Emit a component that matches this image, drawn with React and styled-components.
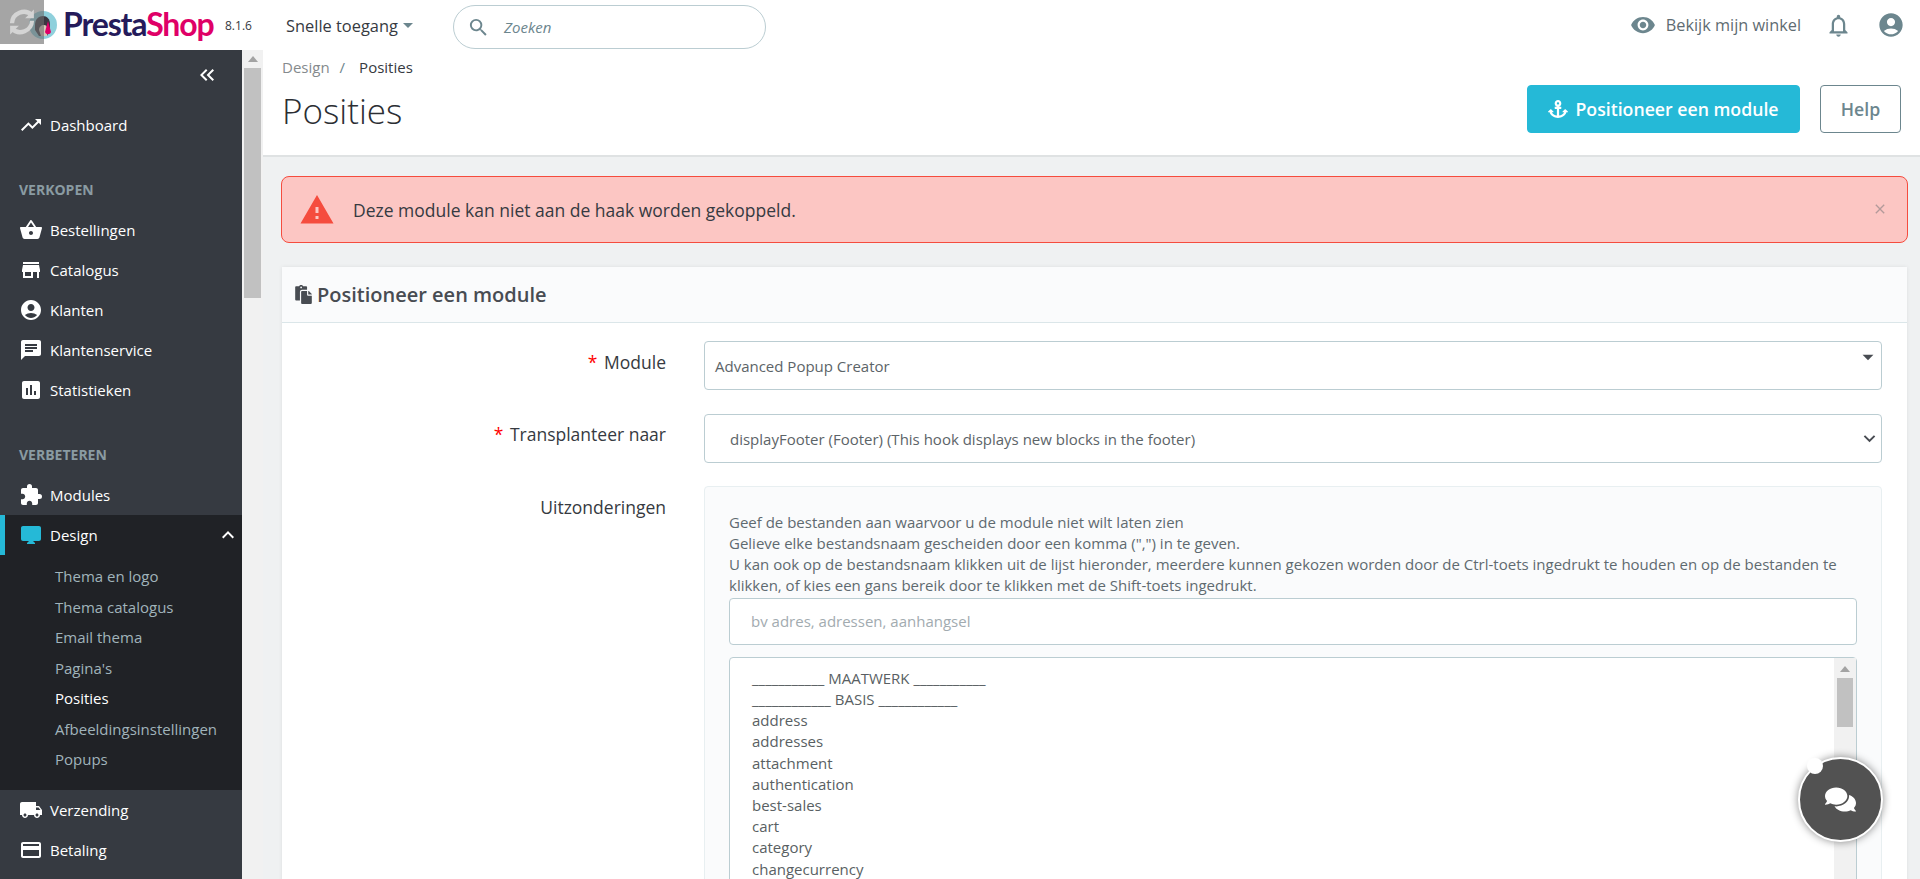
import React from 'react';
import styled, { createGlobalStyle } from 'styled-components';
import {
  MdTrendingUp, MdShoppingBasket, MdStore, MdAccountCircle, MdChat, MdAssessment,
  MdExtension, MdDesktopMac, MdLocalShipping, MdCreditCard, MdVisibility,
  MdNotificationsNone, MdSearch, MdWarning, MdExpandLess, MdKeyboardDoubleArrowLeft,
  MdArrowDropDown, MdExpandMore, MdClose,
} from 'react-icons/md';
import { FaPaste, FaComments, FaAnchor } from 'react-icons/fa';

const GlobalStyle = createGlobalStyle`
  html, body {
    margin: 0;
    height: 100%;
    overflow: hidden;
    font-family: "Open Sans", sans-serif;
    font-size: 15px;
    color: #363a41;
    background: #eff1f2;
  }
  * { box-sizing: border-box; }
`;

const Page = styled.div`
  display: flex;
  flex-direction: column;
  height: 100vh;
  overflow: hidden;
`;

const Header = styled.header`
  display: flex;
  align-items: center;
  flex: 0 0 50px;
  background: #fff;
  position: relative;
`;

const LogoBox = styled.div`
  position: relative;
  display: flex;
  align-items: center;
  width: 225px;
  height: 50px;
  padding-left: 28px;
  align-self: flex-start;
`;

const LoaderSquare = styled.div`
  position: absolute;
  top: 0;
  left: 0;
  width: 44px;
  height: 44px;
  background: rgba(110, 110, 110, 0.62);
  display: flex;
  align-items: center;
  justify-content: center;
`;

const Wordmark = styled.span`
  font-family: Lato, sans-serif;
  font-weight: 700;
  font-size: 32px;
  letter-spacing: -1.15px;
  margin-left: 5px;
  margin-top: -3px;
  color: #251b5b;
  b { color: #df0067; font-weight: 700; }
`;

const Version = styled.span`
  font-size: 12px;
  color: #363a41;
  width: 61px;
`;

const QuickAccess = styled.div`
  display: flex;
  align-items: center;
  width: 167px;
  font-size: 16.4px;
  color: #363a41;
  svg { color: #6c868e; margin-left: -2px; }
`;

const SearchBox = styled.div`
  display: flex;
  align-items: center;
  width: 313px;
  height: 44px;
  margin-top: 4px;
  padding-left: 13px;
  gap: 14px;
  border: 1px solid #bbcdd2;
  border-radius: 22px;
  font-size: 15px;
  font-style: italic;
  color: #6c868e;
  svg { color: #6c868e; font-size: 23px; }
`;

const HeaderRight = styled.div`
  display: flex;
  align-items: center;
  margin-left: auto;
  padding-right: 15px;
  color: #6c868e;
`;

const ShopLink = styled.span`
  display: flex;
  align-items: center;
  gap: 10px;
  margin-right: 24px;
  font-size: 16.3px;
  color: #5f6c72;
  svg { font-size: 26px; color: #6c868e; }
`;

const BellIcon = styled(MdNotificationsNone)`
  font-size: 27px;
  margin-right: 25px;
`;

const UserIcon = styled(MdAccountCircle)`
  font-size: 28px;
`;

const Body = styled.div`
  display: flex;
  flex: 1;
  min-height: 0;
`;

const Sidebar = styled.nav`
  flex: 0 0 242px;
  background: #363a41;
  color: #fff;
  overflow: hidden;
  position: relative;
`;

const Collapse = styled.div`
  display: flex;
  justify-content: flex-end;
  height: 55px;
  padding: 13px 23px 0 0;
  font-size: 24px;
`;

const NavItem = styled.div`
  display: flex;
  align-items: center;
  position: relative;
  height: 40px;
  padding-left: 19px;
  font-size: 15px;
  color: #fff;
  background: ${p => (p.$active ? '#202226' : 'transparent')};
  svg { flex: 0 0 24px; margin-right: 7px; font-size: 24px; color: ${p => (p.$active ? '#25b9d7' : '#fff')}; }
  ${p => p.$active && 'box-shadow: inset 5px 0 0 #25b9d7;'}
`;

const Chevron = styled(MdExpandLess)`
  position: absolute;
  right: 2px;
  top: 8px;
  && { color: #fff; margin: 0; }
`;

const SectionTitle = styled.div`
  height: 20px;
  margin: 35px 0 10px 19px;
  line-height: 20px;
  font-size: 14px;
  font-weight: 700;
  color: #8a9ba2;
`;

const SubMenu = styled.div`
  background: #202226;
  padding: 6px 0 15px 55px;
`;

const SubItem = styled.div`
  height: 30.5px;
  line-height: 30.5px;
  font-size: 15px;
  color: ${p => (p.$active ? '#fff' : '#a0b4bb')};
`;

const Track = styled.div`
  flex: 0 0 21px;
  background: #f1f1f1;
  padding: 6px 2px 0;
`;

const TrackArrow = styled.div`
  width: 0;
  height: 0;
  margin: 0 auto 6px;
  border: 5px solid transparent;
  border-top: 0;
  border-bottom: 6px solid #a3a3a3;
`;

const TrackThumb = styled.div`
  height: ${p => p.$h}px;
  background: #c1c1c1;
`;

const Main = styled.main`
  flex: 1;
  min-width: 0;
  background: #eff1f2;
`;

const PageHead = styled.div`
  position: relative;
  height: 107px;
  background: #fff;
  border-bottom: 2px solid #dfe2e3;
  padding: 5px 19px 0;
`;

const Breadcrumb = styled.div`
  display: flex;
  height: 24px;
  align-items: center;
  font-size: 15px;
  color: #363a41;
  span { color: #858a8d; }
  i { font-style: normal; color: #6c868e; margin: 0 14px 0 10px; }
`;

const HeadRow = styled.div`
  display: flex;
  align-items: flex-start;
  justify-content: space-between;
`;

const Title = styled.h1`
  margin: 8px 0 0;
  font-size: 35px;
  line-height: 48px;
  font-weight: 300;
  color: #2b2e33;
`;

const HeadButtons = styled.div`
  display: flex;
  gap: 20px;
  margin-top: 6px;
`;

const Button = styled.button`
  display: flex;
  align-items: center;
  justify-content: center;
  height: 48px;
  width: ${p => p.$w}px;
  border-radius: 4px;
  font-family: inherit;
  font-size: 17.7px;
  font-weight: 600;
  color: ${p => (p.$primary ? '#fff' : '#6c868e')};
  background: ${p => (p.$primary ? '#25b9d7' : '#fff')};
  border: 1px solid ${p => (p.$primary ? '#25b9d7' : '#6c868e')};
  svg { font-size: 20px; margin-right: 7px; }
`;

const Alert = styled.div`
  display: flex;
  align-items: center;
  position: relative;
  height: 67px;
  margin: 19px 12px 0 18px;
  padding-left: 17px;
  background: #fcc6c3;
  border: 1px solid #f54c3e;
  border-radius: 8px;
  font-size: 17.5px;
  svg { font-size: 36px; color: #f54c3e; margin-right: 18px; }
`;

const AlertClose = styled(MdClose)`
  position: absolute;
  right: 19px;
  top: 24px;
  && { font-size: 16px; color: #b39a9a; margin: 0; }
`;

const Card = styled.section`
  margin: 24px 13px 0 19px;
  background: #fff;
  box-shadow: 0 0 4px rgba(0, 0, 0, 0.08);
`;

const CardHeader = styled.div`
  display: flex;
  align-items: center;
  height: 56px;
  padding-left: 12px;
  background: #fafbfc;
  border-bottom: 1px solid #dbe6e9;
  font-size: 20px;
  font-weight: 600;
  color: #484c52;
  svg { font-size: 19px; margin-right: 4px; }
`;

const CardBody = styled.div`
  display: grid;
  grid-template-columns: 384px 1fr;
  column-gap: 38px;
  row-gap: 23.5px;
  padding: 18px 25px 0 0;
`;

const Label = styled.label`
  text-align: right;
  font-size: 17.5px;
  line-height: 24px;
  padding-top: 8.5px;
  color: #363a41;
  em { font-style: normal; color: #f00; margin-right: 2px; }
`;

const SelectBox = styled.div`
  display: flex;
  align-items: center;
  position: relative;
  height: 49px;
  padding-left: ${p => p.$indent}px;
  padding-top: ${p => p.$textTop}px;
  border: 1px solid #bbcdd2;
  border-radius: 4px;
  font-size: 15px;
  color: #5c6468;
  background: #fff;
  svg { position: absolute; right: ${p => p.$iconRight}px; color: #484c52; top: ${p => p.$iconTop}px; font-size: ${p => p.$iconSize}px; }
`;

const Well = styled.div`
  height: 500px;
  padding: 24.5px 24px 0;
  background: #fafbfc;
  border: 1px solid #e8eff1;
  border-radius: 4px;
  font-size: 15px;
  line-height: 21.2px;
  color: #5f6a70;
`;

const FilterInput = styled.div`
  display: flex;
  align-items: center;
  height: 47px;
  margin-top: 1.5px;
  padding-left: 21px;
  background: #fff;
  border: 1px solid #bbcdd2;
  border-radius: 4px;
  color: #a2abb0;
`;

const ListBox = styled.div`
  display: flex;
  height: 400px;
  margin-top: 12px;
  background: #fff;
  border: 1px solid #bbcdd2;
  border-radius: 4px 4px 0 0;
`;

const ListItems = styled.div`
  flex: 1;
  padding: 10px 0 0 22px;
  color: #595f63;
`;

const ListTrack = styled(Track)`
  flex: 0 0 22px;
  padding: 8px 3px 0;
`;

const ChatButton = styled.div`
  position: fixed;
  left: 1798px;
  top: 757px;
  width: 85px;
  height: 85px;
  display: flex;
  align-items: center;
  justify-content: center;
  border-radius: 50%;
  background: #525252;
  border: 2px solid #fff;
  box-shadow: 0 0 8px rgba(0, 0, 0, 0.45);
  color: #fff;
  font-size: 31px;
`;

const ChatDot = styled.div`
  position: absolute;
  left: 7px;
  top: -1px;
  width: 16px;
  height: 16px;
  border-radius: 50%;
  background: #fff;
`;

const salesItems = [
  ['Bestellingen', MdShoppingBasket],
  ['Catalogus', MdStore],
  ['Klanten', MdAccountCircle],
  ['Klantenservice', MdChat],
  ['Statistieken', MdAssessment],
];

const designItems = ['Thema en logo', 'Thema catalogus', 'Email thema', "Pagina's", 'Posities', 'Afbeeldingsinstellingen', 'Popups'];

const listItems = [
  '___________ MAATWERK ___________',
  '____________ BASIS ____________',
  'address', 'addresses', 'attachment', 'authentication', 'best-sales', 'cart', 'category', 'changecurrency', 'cms',
];

const Logo = () => (
  <svg width="30" height="30" viewBox="0 0 30 30" aria-hidden="true">
    <circle cx="15" cy="15" r="14" fill="#8fd0dc" />
    <path d="M7 15c0-6 4-9 8-9s7 3 7 8v5l-3 7H11l-4-6z" fill="#3a3640" />
    <path d="M11 20c0-3 2-5 5-5 2 0 3 1 3 3v8h-6z" fill="#d8c7b8" />
    <path d="M20 11l3 11c-1 3-5 3-6 0z" fill="#df0067" />
  </svg>
);

const Loader = () => (
  <svg width="30" height="32" viewBox="0 0 24 24" fill="none" stroke="#d4d4d4" strokeWidth="3.4" aria-hidden="true">
    <path d="M20 6.5A9.5 9.5 0 0 0 4 13" />
    <path d="M4 17.5A9.5 9.5 0 0 0 20 11" />
    <path d="M21.5 2v7h-7z" fill="#d4d4d4" stroke="none" />
    <path d="M2.5 22v-7h7z" fill="#d4d4d4" stroke="none" />
  </svg>
);

const App = () => (
  <Page>
    <GlobalStyle />
    <Header>
      <LogoBox>
        <LoaderSquare><Loader /></LoaderSquare>
        <Logo />
        <Wordmark>Presta<b>Shop</b></Wordmark>
      </LogoBox>
      <Version>8.1.6</Version>
      <QuickAccess>Snelle toegang<MdArrowDropDown size={24} /></QuickAccess>
      <SearchBox><MdSearch />Zoeken</SearchBox>
      <HeaderRight>
        <ShopLink><MdVisibility />Bekijk mijn winkel</ShopLink>
        <BellIcon />
        <UserIcon />
      </HeaderRight>
    </Header>
    <Body>
      <Sidebar>
        <Collapse><MdKeyboardDoubleArrowLeft /></Collapse>
        <NavItem><MdTrendingUp />Dashboard</NavItem>
        <SectionTitle>VERKOPEN</SectionTitle>
        {salesItems.map(([label, Icon]) => (
          <NavItem key={label}><Icon />{label}</NavItem>
        ))}
        <SectionTitle>VERBETEREN</SectionTitle>
        <NavItem><MdExtension />Modules</NavItem>
        <NavItem $active><MdDesktopMac />Design<Chevron /></NavItem>
        <SubMenu>
          {designItems.map(label => (
            <SubItem key={label} $active={label === 'Posities'}>{label}</SubItem>
          ))}
        </SubMenu>
        <NavItem><MdLocalShipping />Verzending</NavItem>
        <NavItem><MdCreditCard />Betaling</NavItem>
      </Sidebar>
      <Track>
        <TrackArrow />
        <TrackThumb $h={230} />
      </Track>
      <Main>
        <PageHead>
          <Breadcrumb><span>Design</span><i>/</i>Posities</Breadcrumb>
          <HeadRow>
            <Title>Posities</Title>
            <HeadButtons>
              <Button $primary $w={273}><FaAnchor />Positioneer een module</Button>
              <Button $w={81}>Help</Button>
            </HeadButtons>
          </HeadRow>
        </PageHead>
        <Alert>
          <MdWarning />
          Deze module kan niet aan de haak worden gekoppeld.
          <AlertClose />
        </Alert>
        <Card>
          <CardHeader><FaPaste />Positioneer een module</CardHeader>
          <CardBody>
            <Label><em>*</em> Module</Label>
            <SelectBox $indent={10} $textTop={1} $iconTop={2} $iconRight={0} $iconSize={26}>
              Advanced Popup Creator
              <MdArrowDropDown />
            </SelectBox>
            <Label><em>*</em> Transplanteer naar</Label>
            <SelectBox $indent={25} $textTop={2} $iconTop={12} $iconRight={0} $iconSize={23}>
              displayFooter (Footer) (This hook displays new blocks in the footer)
              <MdExpandMore />
            </SelectBox>
            <Label>Uitzonderingen</Label>
            <Well>
              Geef de bestanden aan waarvoor u de module niet wilt laten zien<br />
              Gelieve elke bestandsnaam gescheiden door een komma (",") in te geven.<br />
              U kan ook op de bestandsnaam klikken uit de lijst hieronder, meerdere kunnen gekozen worden door de Ctrl-toets ingedrukt te houden en op de bestanden te klikken, of kies een gans bereik door te klikken met de Shift-toets ingedrukt.
              <FilterInput>bv adres, adressen, aanhangsel</FilterInput>
              <ListBox>
                <ListItems>
                  {listItems.map(item => <div key={item}>{item}</div>)}
                </ListItems>
                <ListTrack>
                  <TrackArrow />
                  <TrackThumb $h={49} />
                </ListTrack>
              </ListBox>
            </Well>
          </CardBody>
        </Card>
      </Main>
    </Body>
    <ChatButton><ChatDot /><FaComments /></ChatButton>
  </Page>
);

export default App;
